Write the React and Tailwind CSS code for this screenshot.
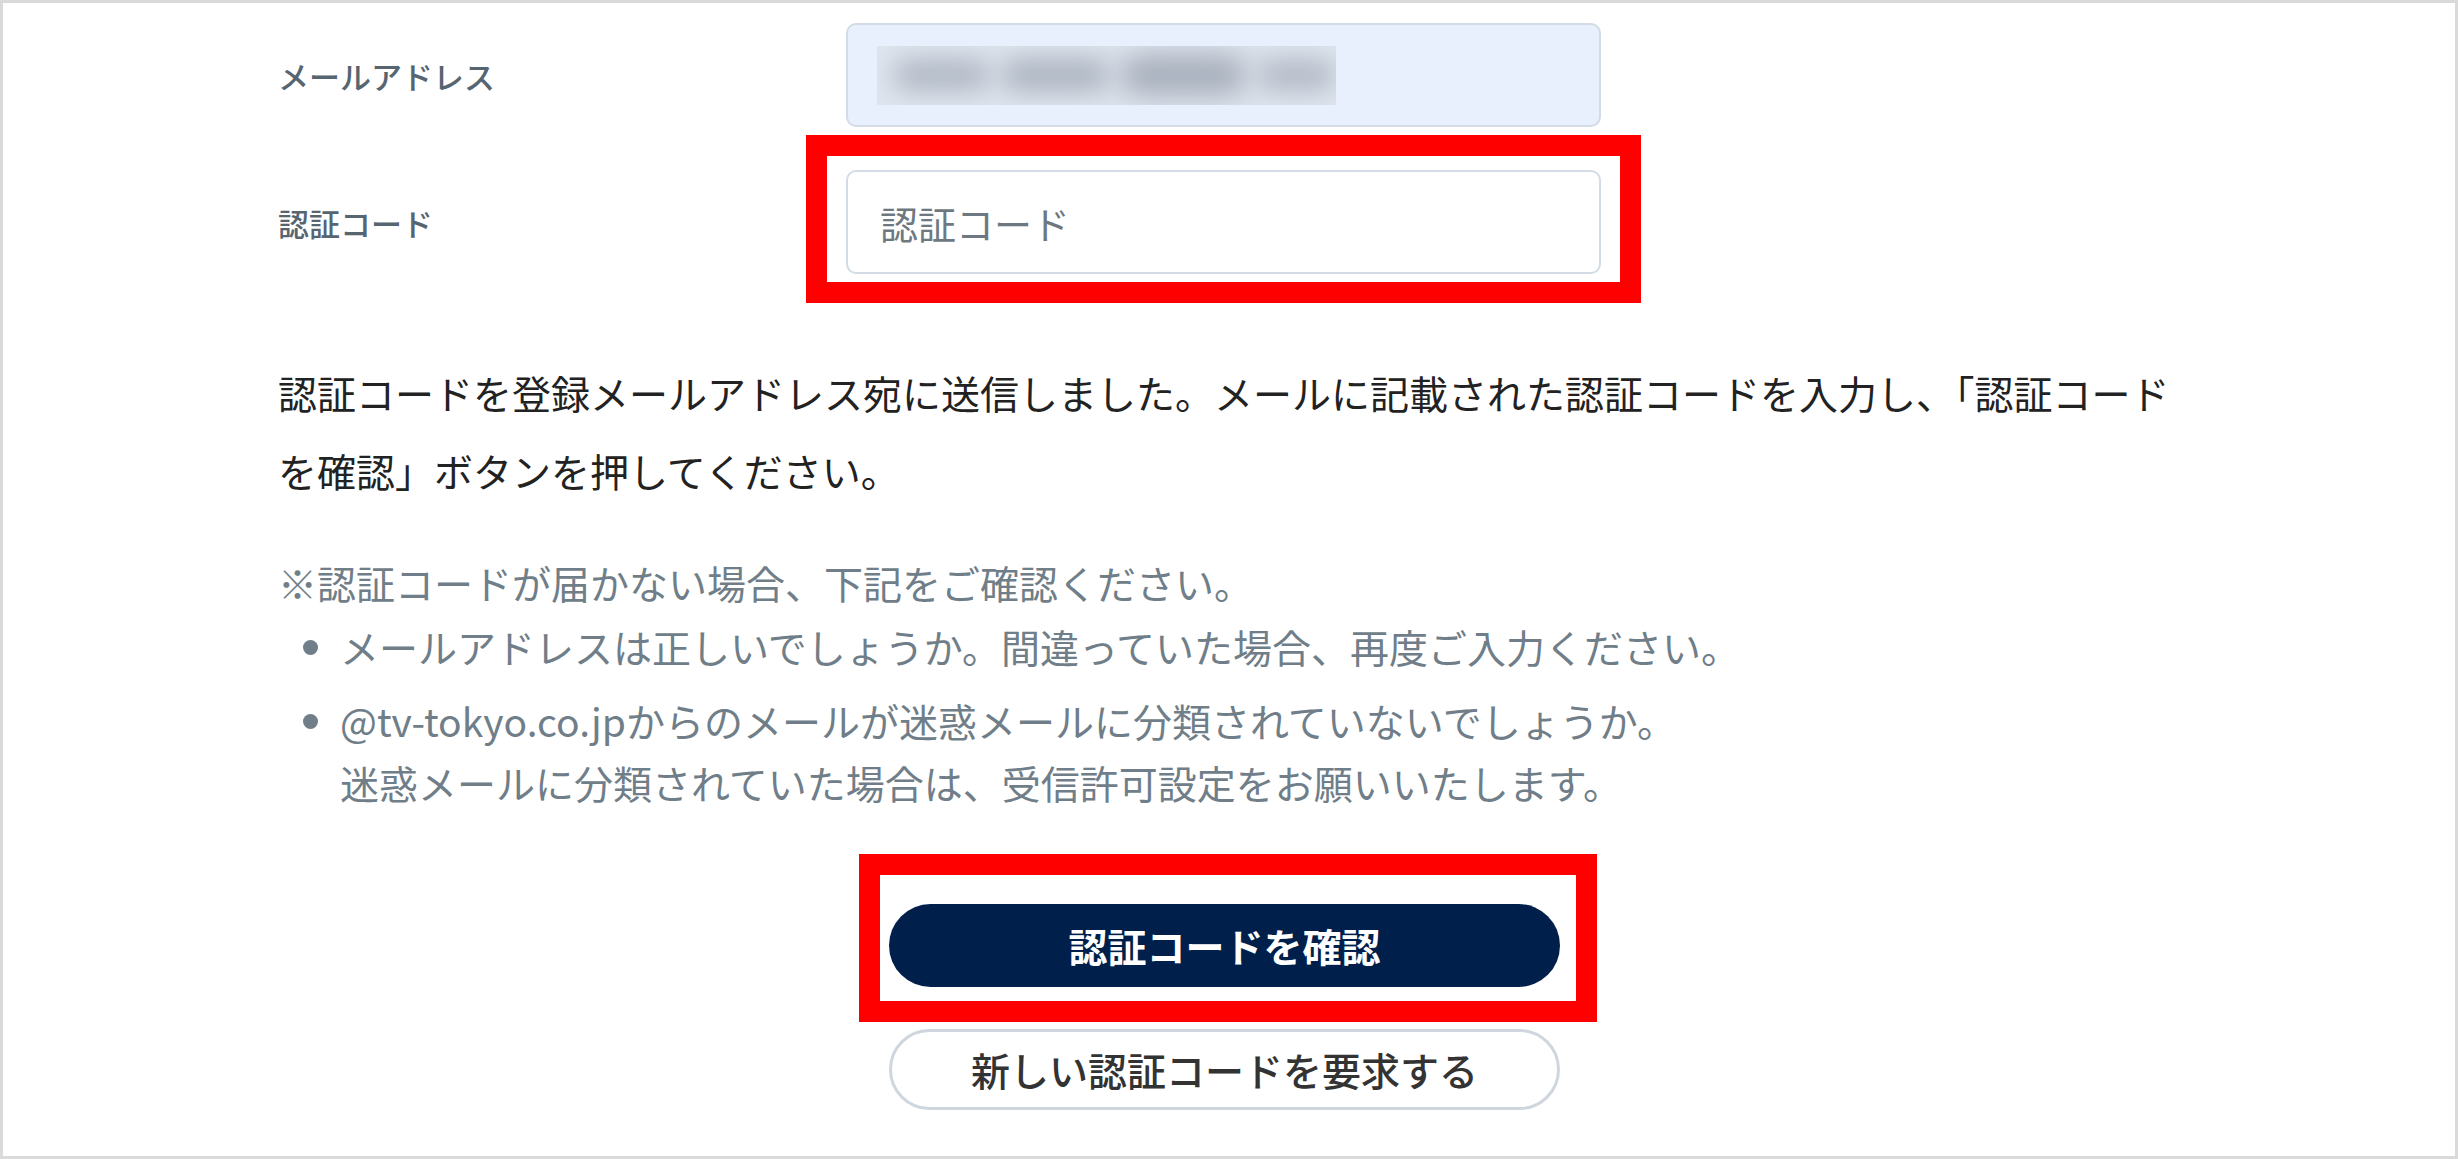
import React from "react";

export default function App() {
  const font = { fontFamily: '"Noto Sans CJK JP", "Noto Sans", sans-serif' };
  return (
    <div
      className="w-[2458px] h-[1159px] bg-white border-[3px] border-[#dadada] overflow-hidden"
      style={font}
    >
      <div className="w-[1902px] mx-auto pt-[20px]">
        {/* email row */}
        <div className="grid grid-cols-[568px_755px] items-center">
          <div className="text-[31px] font-medium text-[#566570] leading-none">メールアドレス</div>
          <div className="h-[104px] rounded-[10px] border-2 border-[#d3dbe5] bg-[#e8f0fe] flex items-center pl-[29px]">
            <div className="w-[459px] h-[59px] bg-[#dfe5ee] overflow-hidden flex items-center gap-[10px] pl-[16px]">
              <div className="w-[100px] h-[32px] rounded-full bg-[#b0b8c4] blur-[13px]" />
              <div className="w-[110px] h-[34px] rounded-full bg-[#adb5c1] blur-[13px]" />
              <div className="w-[130px] h-[40px] rounded-full bg-[#a6aebb] blur-[14px]" />
              <div className="w-[80px] h-[32px] rounded-full bg-[#b2bac6] blur-[13px]" />
            </div>
          </div>
        </div>

        {/* code row */}
        <div className="grid grid-cols-[568px_755px] items-center mt-[43px]">
          <div className="text-[31px] font-medium text-[#566570] leading-none">認証コード</div>
          <div className="relative">
            <input
              className="w-full h-[104px] rounded-[10px] border-2 border-[#d3dbe5] bg-white pl-[32px] text-[38px] text-[#333] placeholder:text-[#6e7880] outline-none"
              placeholder="認証コード"
              style={font}
            />
            <div className="absolute left-[-40px] top-[-35px] w-[835px] h-[168px] border-[21px] border-[#ff0000] pointer-events-none" />
          </div>
        </div>

        {/* message */}
        <p className="mt-[79px] text-[39px] leading-[78px] text-[#222]">
          認証コードを登録メールアドレス宛に送信しました。メールに記載された認証コードを入力し、「認証コードを確認」ボタンを押してください。
        </p>

        <div className="mt-[42px] text-[39px] leading-[62px] text-[#6f7e88]">
          <p>※認証コードが届かない場合、下記をご確認ください。</p>
          <ul className="mt-[2px] list-disc pl-[62px] marker:text-[#6f7e88]">
            <li>メールアドレスは正しいでしょうか。間違っていた場合、再度ご入力ください。</li>
            <li className="mt-[12px]">
              @tv-tokyo.co.jpからのメールが迷惑メールに分類されていないでしょうか。
              <br />
              迷惑メールに分類されていた場合は、受信許可設定をお願いいたします。
            </li>
          </ul>
        </div>

        {/* buttons */}
        <div className="mt-[91px] flex flex-col items-center pr-[9px]">
          <div className="relative">
            <button
              className="w-[671px] h-[83px] rounded-full bg-[#00204b] text-white text-[39px] font-bold flex items-center justify-center"
              style={font}
            >
              認証コードを確認
            </button>
            <div className="absolute left-[-30px] top-[-50px] w-[738px] h-[168px] border-[21px] border-[#ff0000] pointer-events-none" />
          </div>
          <button
            className="mt-[42px] w-[671px] h-[81px] rounded-full bg-white border-[3px] border-[#cfd6de] text-[#333] text-[39px] font-medium flex items-center justify-center"
            style={font}
          >
            新しい認証コードを要求する
          </button>
        </div>
      </div>
    </div>
  );
}
